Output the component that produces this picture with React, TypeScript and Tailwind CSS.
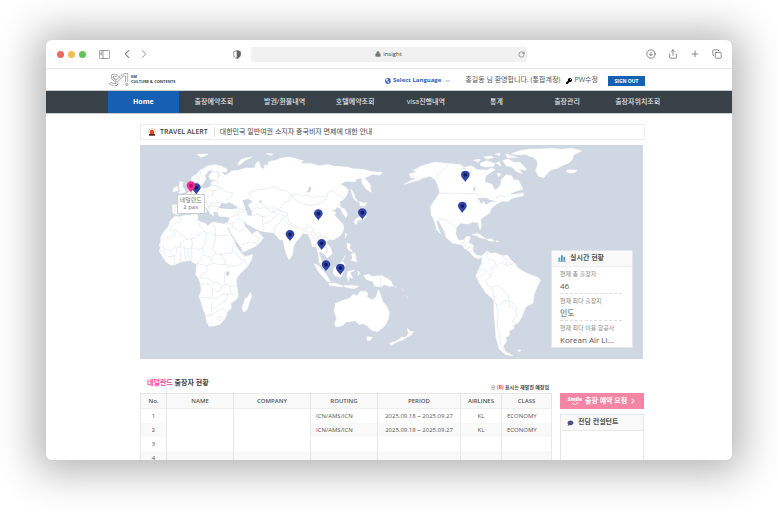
import React, { useState } from 'react';
import { ChevronDown, ChevronLeft, ChevronRight, CircleArrowDown, Copy, Lock, Plus, RotateCw, Share } from 'lucide-react';
import { FaChevronRight, FaComment, FaGlobeAmericas, FaKey } from 'react-icons/fa';

type Pin = {
  name: string;
  x: number;
  y: number;
};

type Trip = {
  no: number;
  routing: string;
  period: string;
  airline: string;
  cabin: string;
};

const MENU = ['Home', '출장예약조회', '발권/환불내역', '호텔예약조회', 'visa진행내역', '통계', '출장관리', '출장자위치조회'];

// Pin tips in map units
const PINS: Pin[] = [
  { name: '독일', x: 199, y: 164 },
  { name: '중국', x: 565, y: 242 },
  { name: '일본', x: 697, y: 239 },
  { name: '인도', x: 480, y: 304 },
  { name: '태국', x: 575, y: 331 },
  { name: '싱가포르', x: 588, y: 395 },
  { name: '인도네시아', x: 631, y: 405 },
  { name: '캐나다', x: 1006, y: 126 },
  { name: '미국', x: 997, y: 219 },
];

const TRIPS: Trip[] = [
  { no: 1, routing: 'ICN/AMS/ICN', period: '2025.09.18 ~ 2025.09.27', airline: 'KL', cabin: 'ECONOMY' },
  { no: 2, routing: 'ICN/AMS/ICN', period: '2025.09.18 ~ 2025.09.27', airline: 'KL', cabin: 'ECONOMY' },
  { no: 3, routing: '', period: '', airline: '', cabin: '' },
  { no: 4, routing: '', period: '', airline: '', cabin: '' },
];

const STATS = [
  { label: '현재 총 출장자', value: '46' },
  { label: '현재 최다 출장지', value: '인도' },
  { label: '현재 최다 이용 항공사', value: 'Korean Air Li...' },
];

const MapPin = ({ x, y, fill, core }: { x: number; y: number; fill: string; core: string }) => (
  <g transform={`translate(${x} ${y})`}>
    <path d="M0 0C-3-8-13-13-13-22a13 12 0 0 1 26 0C13-13 3-8 0 0Z" fill={fill} />
    <circle cy="-21" r="5.5" fill={core} />
  </g>
);

const WorldMap = () => (
  <svg viewBox="30 15 1509 642" className="block w-full" role="img" aria-label="출장자 현황 지도">
    <rect x="30" y="15" width="1509" height="642" fill="#cfd7e3" />
    <g fill="#fff" stroke="#fff" strokeWidth="1.5" strokeLinejoin="round">
      {/* Africa */}
      <path d="M135 228 146 231 165 226 186 225 201 222 204 231 202 240 212 246 225 250 234 258 240 252 250 246 268 250 280 252 290 250 297 258 292 266 303 285 313 303 318 319 326 329 336 341 345 350 368 344 364 360 352 380 332 399 322 412 318 426 322 445 325 468 318 479 302 490 304 504 292 516 287 533 271 552 257 557 237 559 230 545 227 525 218 505 213 485 207 470 214 450 211 430 205 415 197 403 199 385 200 371 190 368 181 361 163 364 150 367 136 373 123 376 110 367 98 350 88 334 91 323 88 314 93 303 92 292 103 273 116 259 120 244Z" />
      <path d="M345 477 354 470 361 457 365 470 358 487 351 510 342 516 336 507 340 493Z" />
      {/* Eurasia */}
      <path d="M127 195 150 194 160 183 152 168 167 162 184 153 200 149 203 134 211 128 212 146 234 144 244 138 243 126 262 121 240 118 236 108 249 94 238 90 225 106 227 118 218 133 211 140 204 124 194 130 184 121 185 112 198 104 212 89 235 77 256 74 274 79 292 88 290 96 274 96 284 106 298 99 305 93 323 91 350 84 374 84 378 70 387 64 392 83 404 88 402 76 417 74 414 66 440 60 450 55 478 51 501 57 520 62 510 71 541 70 554 74 570 77 592 73 613 79 650 81 669 86 700 88 727 95 757 97 750 105 727 103 714 110 703 113 720 132 724 157 709 148 696 130 695 114 680 116 676 125 648 124 630 132 645 140 655 150 651 164 641 178 628 186 631 201 645 208 652 222 648 234 639 221 631 205 620 201 615 209 603 209 618 218 613 226 628 241 640 255 641 269 632 286 612 299 597 299 588 306 602 324 607 341 591 354 585 345 573 335 566 337 574 361 585 374 592 393 583 389 568 368 565 344 559 318 547 321 543 302 534 282 517 280 511 292 497 306 490 321 488 342 478 359 470 345 463 321 459 298 451 300 439 287 431 278 402 275 382 269 365 260 352 253 341 242 344 258 359 274 365 282 382 273 400 293 389 309 372 321 338 336 334 323 318 302 298 269 293 249 300 233 288 230 267 229 263 216 250 215 251 229 242 221 231 206 219 195 230 214 224 220 211 211 197 198 184 197 172 196 164 208 154 219 143 224 129 219Z" />
      <path d="M149 125 159 126 156 137 163 148 166 155 154 160 145 160 152 151 147 144ZM130 145 142 139 144 151 130 156ZM200 43 235 42 224 48 214 52ZM323 72 333 59 350 53 367 51 346 61 336 69 328 75ZM408 40 430 42 422 46Z" />
      {/* Japan and the western Pacific */}
      <path d="M662 146 671 158 675 173 684 186 672 178 666 162ZM689 184 699 190 710 188 705 199 690 197ZM697 202 705 210 708 230 701 238 683 241 671 247 678 236 694 228ZM672 244 682 245 679 254ZM646 279 651 283 646 294ZM651 309 661 313 659 324 668 335 657 332 651 321ZM664 342 675 339 680 365 663 361 668 354ZM646 347 636 363 644 352Z" />
      <path d="M553 371 564 376 578 391 591 407 602 426 591 424 574 405 562 389ZM596 430 616 430 640 438 636 441 599 436ZM610 386 627 371 638 364 646 375 641 392 633 412 616 408 609 399ZM654 394 674 391 660 398 668 414 657 410 655 424 651 408ZM642 437 662 436 686 439 672 446 645 441ZM684 393 690 400 684 407ZM701 407 715 403 728 410 754 406 779 420 790 438 775 437 763 434 752 441 734 438 729 425 710 419Z" />
      <path d="M617 490 640 481 659 475 669 463 682 468 691 454 707 454 714 460 711 471 728 480 739 469 745 449 752 464 757 483 769 497 778 517 775 536 765 557 743 575 724 570 709 555 698 551 689 555 676 542 649 546 636 557 617 560 614 552 620 535 612 513ZM711 590 727 592 721 601 711 601Z" />
      <g transform="translate(765 0)">
        {/* North America */}
        <path d="M73 102 95 96 85 91 112 77 150 66 195 71 228 74 236 82 260 78 276 89 307 90 320 84 330 89 316 98 302 108 299 126 321 133 330 151 340 143 347 132 350 117 364 104 379 107 387 120 400 121 414 147 389 155 370 164 399 162 414 158 416 167 397 171 379 176 370 184 350 184 334 193 318 206 314 219 287 237 289 258 285 269 279 248 264 246 248 252 226 249 214 263 212 281 220 301 236 300 245 289 256 291 250 308 265 315 263 333 275 346 291 349 281 357 266 350 253 334 239 326 231 315 203 309 183 292 179 276 160 240 154 243 160 267 167 281 155 270 148 242 139 225 136 201 154 174 164 158 159 138 151 119 135 109 113 114 102 120 57 133 95 113 78 113Z" />
        <path d="M425 39 455 29 500 25 530 28 560 25 590 32 574 41 565 45 563 58 551 69 529 78 518 85 498 89 486 101 476 113 461 109 452 92 458 75 456 61 443 51 429 48ZM543 92 554 89 575 90 571 97 557 99 547 97Z" />
        <path d="M379 41 404 32 435 27 488 27 454 35 427 43 403 45ZM287 69 306 62 330 71 326 79 301 81 286 76ZM265 60 286 58 279 67ZM330 43 345 39 345 47ZM295 51 316 48 326 53 306 57ZM362 41 380 47 397 52 367 53ZM353 61 371 57 386 67 405 67 424 87 421 91 402 86 412 101 395 95 381 81 363 77ZM332 69 344 65 347 78ZM337 99 349 103 340 110Z" />
        <path d="M261 284 276 280 290 287 302 296 287 294 275 287ZM304 298 318 296 328 303 315 304ZM334 302 342 304 334 306Z" />
        {/* South America */}
        <path d="M290 347 307 333 315 340 332 339 352 347 368 346 378 361 389 370 401 386 428 401 461 413 466 422 455 443 447 465 444 489 422 501 411 529 399 550 384 555 388 565 372 573 374 585 361 593 366 603 355 617 361 635 384 647 362 644 342 626 338 609 333 592 330 556 327 519 327 481 304 460 283 429 273 408 282 386 291 369Z" />
        <path d="M66 591 54 599 37 605 18 616 14 610 35 603 50 592ZM67 564 75 574 86 575 78 585 64 592 70 579ZM8 431 20 424 13 442ZM26 438 36 443M48 445 57 454M63 466 69 474M398 630 408 631 401 635Z" />
      </g>
    </g>
    {/* Inland seas and lakes */}
    <path d="M266 204 275 188 288 191 299 187 318 198 324 205 300 208ZM338 181 355 177 367 184 354 195 365 214 365 228 353 226 345 205ZM385 183 397 181 393 190ZM289 396 299 394 297 408 287 406ZM539 139 545 143 541 155 530 159ZM1031 142 1036 138 1035 153 1030 153ZM1042 174 1070 174 1082 181 1103 183 1079 187 1069 194 1061 183 1054 193 1049 183ZM996 84 1012 83 1002 88ZM1006 100 1027 96 1014 104Z" fill="#cfd7e3" />
    {/* Country borders */}
    <g fill="none" stroke="#dfe4ec" strokeWidth="2" strokeLinejoin="round">
      <path d="M151 231 153 243 132 252 118 270 134 272 134 288 109 293 98 302M134 270 172 297 151 307 151 321 137 321 122 332 105 326 90 319M172 297 190 296 222 273 201 245M222 273 230 277 256 286 256 266 248 252M230 277 227 304 218 326 200 328 185 323 174 328 163 322 151 321M256 286 254 308 247 326 258 341 277 344 290 338 305 341 311 316 318 302M254 286 302 286M218 326 220 344 210 363 201 371M220 344 244 354 258 341M201 371 221 375 232 377 231 395 213 405 206 414M232 377 250 370 271 374 286 373 298 377 324 378 343 360 325 352 317 335M271 344 285 360 286 373M343 360 354 380M298 377 293 392 283 398 283 416 286 433 273 440 263 425 249 428 232 414 210 415M286 433 301 438 322 435M214 432 242 432 247 448 247 473 208 473M247 448 262 454 275 448 273 440M247 473 258 478 275 463 293 461 288 483 274 487 260 503 245 505 247 483M245 503 242 527 228 526M242 527 257 516 280 504 291 517M301 438 302 456 309 464 293 461M293 518 287 525 293 529M262 533 271 529 277 536 270 542 264 538ZM163 322 167 360M174 328 179 360M185 323 186 363M138 322 141 339 132 348 110 351M132 348 135 373M89 334 103 334 105 347M151 337 153 367M121 331 126 345M243 354 245 370M184 296 188 314 182 323" />
      <path d="M231 76 213 94 207 115 205 128M243 86 247 96 261 94 266 112M266 79 263 93 270 105 260 118M262 121 262 134 276 146 286 155 307 158 306 171 285 181M240 134 257 138 272 147 249 153 235 148M215 147 219 165 235 169 248 167 249 152M219 165 204 164 198 178 210 184 227 185 244 190 264 188 275 184M204 164 190 160M184 155 187 167 201 174M186 186 197 180 216 189M226 185 236 198 241 211M236 198 250 199 264 200 262 212M244 190 238 203M257 177 268 187M149 195 172 196M137 197 134 216M316 208 325 218 345 215M301 233 325 222 327 237 310 249 296 250M327 237 343 246M296 265 309 262 326 274 337 271 342 263M310 249 305 263M338 315 355 306 383 309M383 309 389 294 366 284M365 228 380 222 398 229 398 252 403 267 391 274M398 229 417 228 428 216 445 222 428 235 420 247 401 251M428 216 447 209 462 227 450 247 437 258 431 278M366 213 383 201 390 207 404 202 430 219M394 190 415 204 437 204 450 210M354 176 365 168 353 161 365 155 387 149 406 147 438 139 449 150 466 151 486 165 479 181 462 188 454 200 446 209" />
      <path d="M486 165 502 161 515 168 530 165 548 172 569 168 592 170 593 158 608 153 622 166 643 174M486 166 499 182 519 193 545 196 569 191 579 182 594 175M450 210 472 220 475 244 503 260 518 267 540 260 548 267 543 281 554 299M462 244 479 256 504 266M471 226 453 242M515 270 531 275 536 285M548 267 556 284 565 291 575 288 587 293 602 300M565 291 560 302 568 312 580 309 590 322 594 337M560 302 556 315 568 332M580 323 593 324 588 344M620 201 633 190M628 221 641 220M611 385 624 386 637 374M752 405 752 441M324 205 348 211M578 388 590 400" />
      <g transform="translate(765 0)">
        <path d="M195 71 153 108 158 119M164 159 270 161 288 167 305 178M331 175 345 166 357 171 370 165M158 237 185 240 193 249 203 252 213 265M228 312 238 306 239 297M248 309 240 318M263 318 246 326M262 334 253 333M308 335 305 350 315 360 329 362 333 378 318 386 318 410 305 394 282 387M333 378 350 368 365 377 366 360 353 350M365 377 386 371M352 366 361 354M378 375 376 365M388 385 397 377M278 414 289 406 305 394M318 410 302 420 306 435 323 444 327 476 334 467M323 439 339 438 353 449 369 465 374 485 360 480 343 496 333 493 327 476M374 485 374 500 393 512 395 530 382 543 394 551M360 480 378 486 397 502 393 512M333 493 339 517 337 561 344 584 347 613 358 632" />
      </g>
    </g>
    {PINS.map((pin) => (
      <MapPin key={pin.name} x={pin.x} y={pin.y} fill="#3044a8" core="#111b5e" />
    ))}
    <MapPin x={183} y={158} fill="#f72c8e" core="#b3126c" />
  </svg>
);

// Ribbon mark: each stroke is drawn wide, then hollowed out in white
const Logo = () => (
  <svg viewBox="26 22 60 40" className="h-[13px] w-5" fill="none" strokeLinejoin="round">
    <g stroke="#6b6b6e" strokeWidth="8">
      <path d="M29 51c6 9 19 10 21 3 2-8-15-12-15-20 0-7 9-8 15-2" />
      <path d="m48 48 8-8 13-12 11-1v23" />
    </g>
    <g stroke="#fff" strokeWidth="5">
      <path d="M29 51c6 9 19 10 21 3 2-8-15-12-15-20 0-7 9-8 15-2" />
      <path d="m48 48 8-8 13-12 11-1v23" />
    </g>
    <path d="m53 31 7 6M35 34l15 17" stroke="#6b6b6e" strokeWidth="1.5" />
    <circle cx="80" cy="57" r="3.5" stroke="#6b6b6e" strokeWidth="2" />
  </svg>
);

const BrowserBar = () => (
  <div className="flex h-[29px] shrink-0 items-center border-b border-[#e9e9e9] pr-2.5 pl-[11px] text-[#666]">
    <div className="flex gap-1">
      <span className="h-[7px] w-[7px] rounded-full bg-[#ee6a5f]" />
      <span className="h-[7px] w-[7px] rounded-full bg-[#f5bd4f]" />
      <span className="h-[7px] w-[7px] rounded-full bg-[#61c454]" />
    </div>
    <button type="button" aria-label="사이드바" className="ml-[13px]">
      <svg viewBox="0 0 33 26" className="h-[9px] w-[11px]" fill="none" stroke="#666" strokeWidth="2">
        <rect x="1" y="1" width="31" height="24" rx="3" />
        <path d="M12 1v24M4 6h5M4 10h5M4 14h5" />
      </svg>
    </button>
    <button type="button" aria-label="뒤로" className="ml-2.5">
      <ChevronLeft className="h-3.5 w-3.5" strokeWidth={1.8} />
    </button>
    <button type="button" aria-label="앞으로" className="ml-[3px] text-[#aaa]">
      <ChevronRight className="h-3.5 w-3.5" strokeWidth={1.8} />
    </button>
    <svg viewBox="0 0 24 26" className="ml-[82px] h-[9px] w-2 shrink-0" fill="none" stroke="#666" strokeWidth="2">
      <path d="M12 1 2 5v8c0 6 4 10 10 12 6-2 10-6 10-12V5Z" />
      <path d="M12 1v24c6-2 10-6 10-12V5Z" fill="#666" />
    </svg>
    <div className="ml-2.5 flex h-[15px] w-[276px] items-center rounded-[3px] bg-[#f1f1f1] pr-0.5">
      <div className="flex flex-1 items-center justify-center gap-0.5 pl-2 text-[6px] text-[#444]">
        <Lock className="h-1.5 w-1.5 fill-[#777] text-[#777]" />
        insight
      </div>
      <button type="button" aria-label="새로고침">
        <RotateCw className="h-[7px] w-[7px]" />
      </button>
    </div>
    <div className="flex flex-1 justify-end gap-3">
      <button type="button" aria-label="다운로드"><CircleArrowDown className="h-2.5 w-2.5" strokeWidth={1.8} /></button>
      <button type="button" aria-label="공유"><Share className="h-2.5 w-2.5" strokeWidth={1.8} /></button>
      <button type="button" aria-label="새 탭"><Plus className="h-2.5 w-2.5" strokeWidth={1.8} /></button>
      <button type="button" aria-label="탭 보기"><Copy className="h-2.5 w-2.5" strokeWidth={1.8} /></button>
    </div>
  </div>
);

const StatsPanel = () => (
  <section className="absolute right-2.5 bottom-[11px] w-[82px] border border-[#e4e6ea] bg-white">
    <h2 className="flex h-4 items-center gap-1 border-b border-[#ececec] bg-[#f9f9f9] pl-1.5 text-[7px] font-bold text-[#555]">
      <svg viewBox="0 0 22 20" className="h-[7px] w-2">
        <path d="M1 7h5v10H1z" fill="#35c3c1" />
        <path d="M8 1h5v16H8z" fill="#3d9fb5" />
        <path d="M15 5h5v12h-5z" fill="#6a8fd0" />
        <path d="M0 18h22v2H0z" fill="#7c9cc0" />
      </svg>
      실시간 현황
    </h2>
    <dl className="pr-2.5 pl-2">
      {STATS.map((stat) => (
        <div key={stat.label} className="h-[27px] border-b border-dashed border-[#ddd] pt-0.5 last:h-[26px] last:border-b-0">
          <dt className="text-[6px] leading-[10px] text-[#888]">{stat.label}</dt>
          <dd className="text-[8px] leading-[14px] text-[#555]">{stat.value}</dd>
        </div>
      ))}
    </dl>
  </section>
);

const TripTable = () => (
  <table className="w-full table-fixed border-collapse border-t border-[#e8e8e8] text-[6px] leading-[8px] text-[#555]">
    <colgroup>
      <col className="w-[26px]" />
      <col className="w-[67px]" />
      <col className="w-[77px]" />
      <col className="w-[67px]" />
      <col className="w-[83px]" />
      <col className="w-[41px]" />
      <col />
    </colgroup>
    <thead>
      <tr className="h-[15px] border-b border-[#eee] bg-[#f9f9f9]">
        {['No.', 'NAME', 'COMPANY', 'ROUTING', 'PERIOD', 'AIRLINES', 'CLASS'].map((title) => (
          <th key={title} className="border-x border-[#e4e4e4] p-0 font-semibold">{title}</th>
        ))}
      </tr>
    </thead>
    <tbody>
      {TRIPS.map((trip) => (
        <tr key={trip.no} className="h-3.5 even:bg-[#f9f9f9]">
          <td className="border-x border-[#e8e8e8] p-0 text-center">{trip.no}</td>
          <td className={`border-x border-[#e8e8e8] p-0 ${trip.routing ? 'bg-white' : ''}`} />
          <td className={`border-x border-[#e8e8e8] p-0 ${trip.routing ? 'bg-white' : ''}`} />
          <td className="border-x border-[#e8e8e8] p-0 pl-[5px] whitespace-nowrap">{trip.routing}</td>
          <td className="border-x border-[#e8e8e8] p-0 text-center whitespace-nowrap">{trip.period}</td>
          <td className="border-x border-[#e8e8e8] p-0 text-center">{trip.airline}</td>
          <td className="border-x border-[#e8e8e8] p-0 pl-[5px]">{trip.cabin}</td>
        </tr>
      ))}
    </tbody>
  </table>
);

const App = () => {
  const [active, setActive] = useState('Home');

  return (
    <div className="h-screen overflow-hidden bg-white px-[46px] pt-10 pb-[52px] font-['Open_Sans','Noto_Sans_CJK_KR',sans-serif]">
      <div className="flex h-full flex-col overflow-hidden rounded-md bg-white shadow-[0_2px_40px_10px_rgba(0,0,0,0.3)]">
        <BrowserBar />

        <header className="flex h-[21px] shrink-0 items-center pt-0.5 pr-[87px] pl-[63px] text-[7px] text-[#555]">
          <a href="#home" className="flex items-center gap-0.5 pb-0.5">
            <Logo />
            <span className="pb-0.5 text-[4px] leading-[5px] font-bold whitespace-nowrap text-[#444]">
              SM
              <br />
              CULTURE &amp; CONTENTS
            </span>
          </a>
          <button type="button" className="ml-auto flex items-center gap-0.5 text-[6px] font-bold whitespace-nowrap text-[#2f5db5]">
            <FaGlobeAmericas className="h-1.5 w-1.5" />
            Select Language
            <ChevronDown className="ml-0.5 h-1.5 w-1.5" />
          </button>
          <span className="ml-3.5 whitespace-nowrap">홍길동 님 환영합니다. (통합계정)</span>
          <a href="#password" className="ml-1.5 flex items-center gap-0.5 whitespace-nowrap">
            <FaKey className="h-1.5 w-1.5 text-black" />
            PW수정
          </a>
          <button type="button" className="ml-2.5 h-2.5 w-[37px] bg-[#1560b3] text-[5px] leading-[10px] font-bold text-white">
            SIGN OUT
          </button>
        </header>

        <nav className="flex h-6 shrink-0 border-t border-b border-[#c9cccf] bg-[#384048] pr-[59px] pl-[62px]">
          {MENU.map((item) => (
            <button
              key={item}
              type="button"
              onClick={() => setActive(item)}
              className={`flex-1 text-[7px] whitespace-nowrap ${active === item ? 'bg-[#1560b3] font-bold text-white' : 'font-medium text-[#e3e5e7]'}`}
            >
              {item}
            </button>
          ))}
        </nav>

        <main className="pt-2.5 pr-[87px] pl-[94px]">
          <div className="flex h-4 items-center border border-[#ececec] pl-[7px] text-[7px] text-[#444]">
            <svg viewBox="0 0 24 24" className="mr-1 h-2 w-2">
              <path d="M6 18v-7a6 6 0 0 1 12 0v7Z" fill="#e4431f" />
              <path d="M12 0v4M2 3l4 4M22 3l-4 4M0 11h4M20 11h4" stroke="#ef6a3a" strokeWidth="2" />
              <path d="M3 18h18v5H3z" fill="#5b2a26" />
            </svg>
            <strong className="font-semibold">TRAVEL ALERT</strong>
            <a href="#alert" className="ml-1.5 border-l border-dashed border-[#ddd] pl-[5px] leading-[10px]">
              대한민국 일반여권 소지자 중국비자 면제에 대한 안내
            </a>
          </div>

          <div className="relative mt-[5px] mr-0.5">
            <WorldMap />
            <div className="absolute top-[23%] left-[7.3%] w-7 border border-[#ccc] bg-white py-0.5 text-center text-[6px] leading-[7px] text-[#777]">
              네덜란드
              <br />2 pax
            </div>
            <StatsPanel />
          </div>

          <div className="mt-4 flex gap-2">
            <section className="min-w-0 flex-1">
              <div className="flex h-[18px] items-center justify-between pr-[3px] pl-[7px] text-[#444]">
                <h2 className="pb-0.5 text-[7px] leading-4 font-bold">
                  <span className="text-[#fb3d97]">네덜란드</span> 출장자 현황
                </h2>
                <p className="pt-1.5 text-[5px] leading-[7px] font-bold">
                  ※ <span className="text-[#f33]">(R)</span> 표시는 재발권 예정임
                </p>
              </div>
              <TripTable />
            </section>

            <aside className="w-[85px] shrink-0 pt-[18px] pr-px">
              <button type="button" className="flex h-4 w-full items-center justify-center gap-[3px] bg-[#f585a5] text-[7px] font-bold text-white">
                <span className="flex flex-col items-center text-[5px] leading-[5px] font-extrabold">
                  Smile
                  <svg viewBox="0 0 26 10" className="h-[3px] w-2" fill="none" stroke="#fff" strokeWidth="2">
                    <path d="M1 1c4 9 20 9 24 0M8 1v4M18 1v4" />
                  </svg>
                </span>
                출장 예약 요청
                <FaChevronRight className="h-1.5 w-1.5" />
              </button>
              <div className="mt-[5px] h-20 border border-[#e8e8e8]">
                <h2 className="flex h-4 items-center gap-1 border-b border-[#e8e8e8] bg-[#f9f9f9] pl-1.5 text-[7px] font-bold text-[#555]">
                  <FaComment className="h-1.5 w-[7px] text-[#4a5181]" />
                  전담 컨설턴트
                </h2>
              </div>
            </aside>
          </div>
        </main>
      </div>
    </div>
  );
};

export default App;
